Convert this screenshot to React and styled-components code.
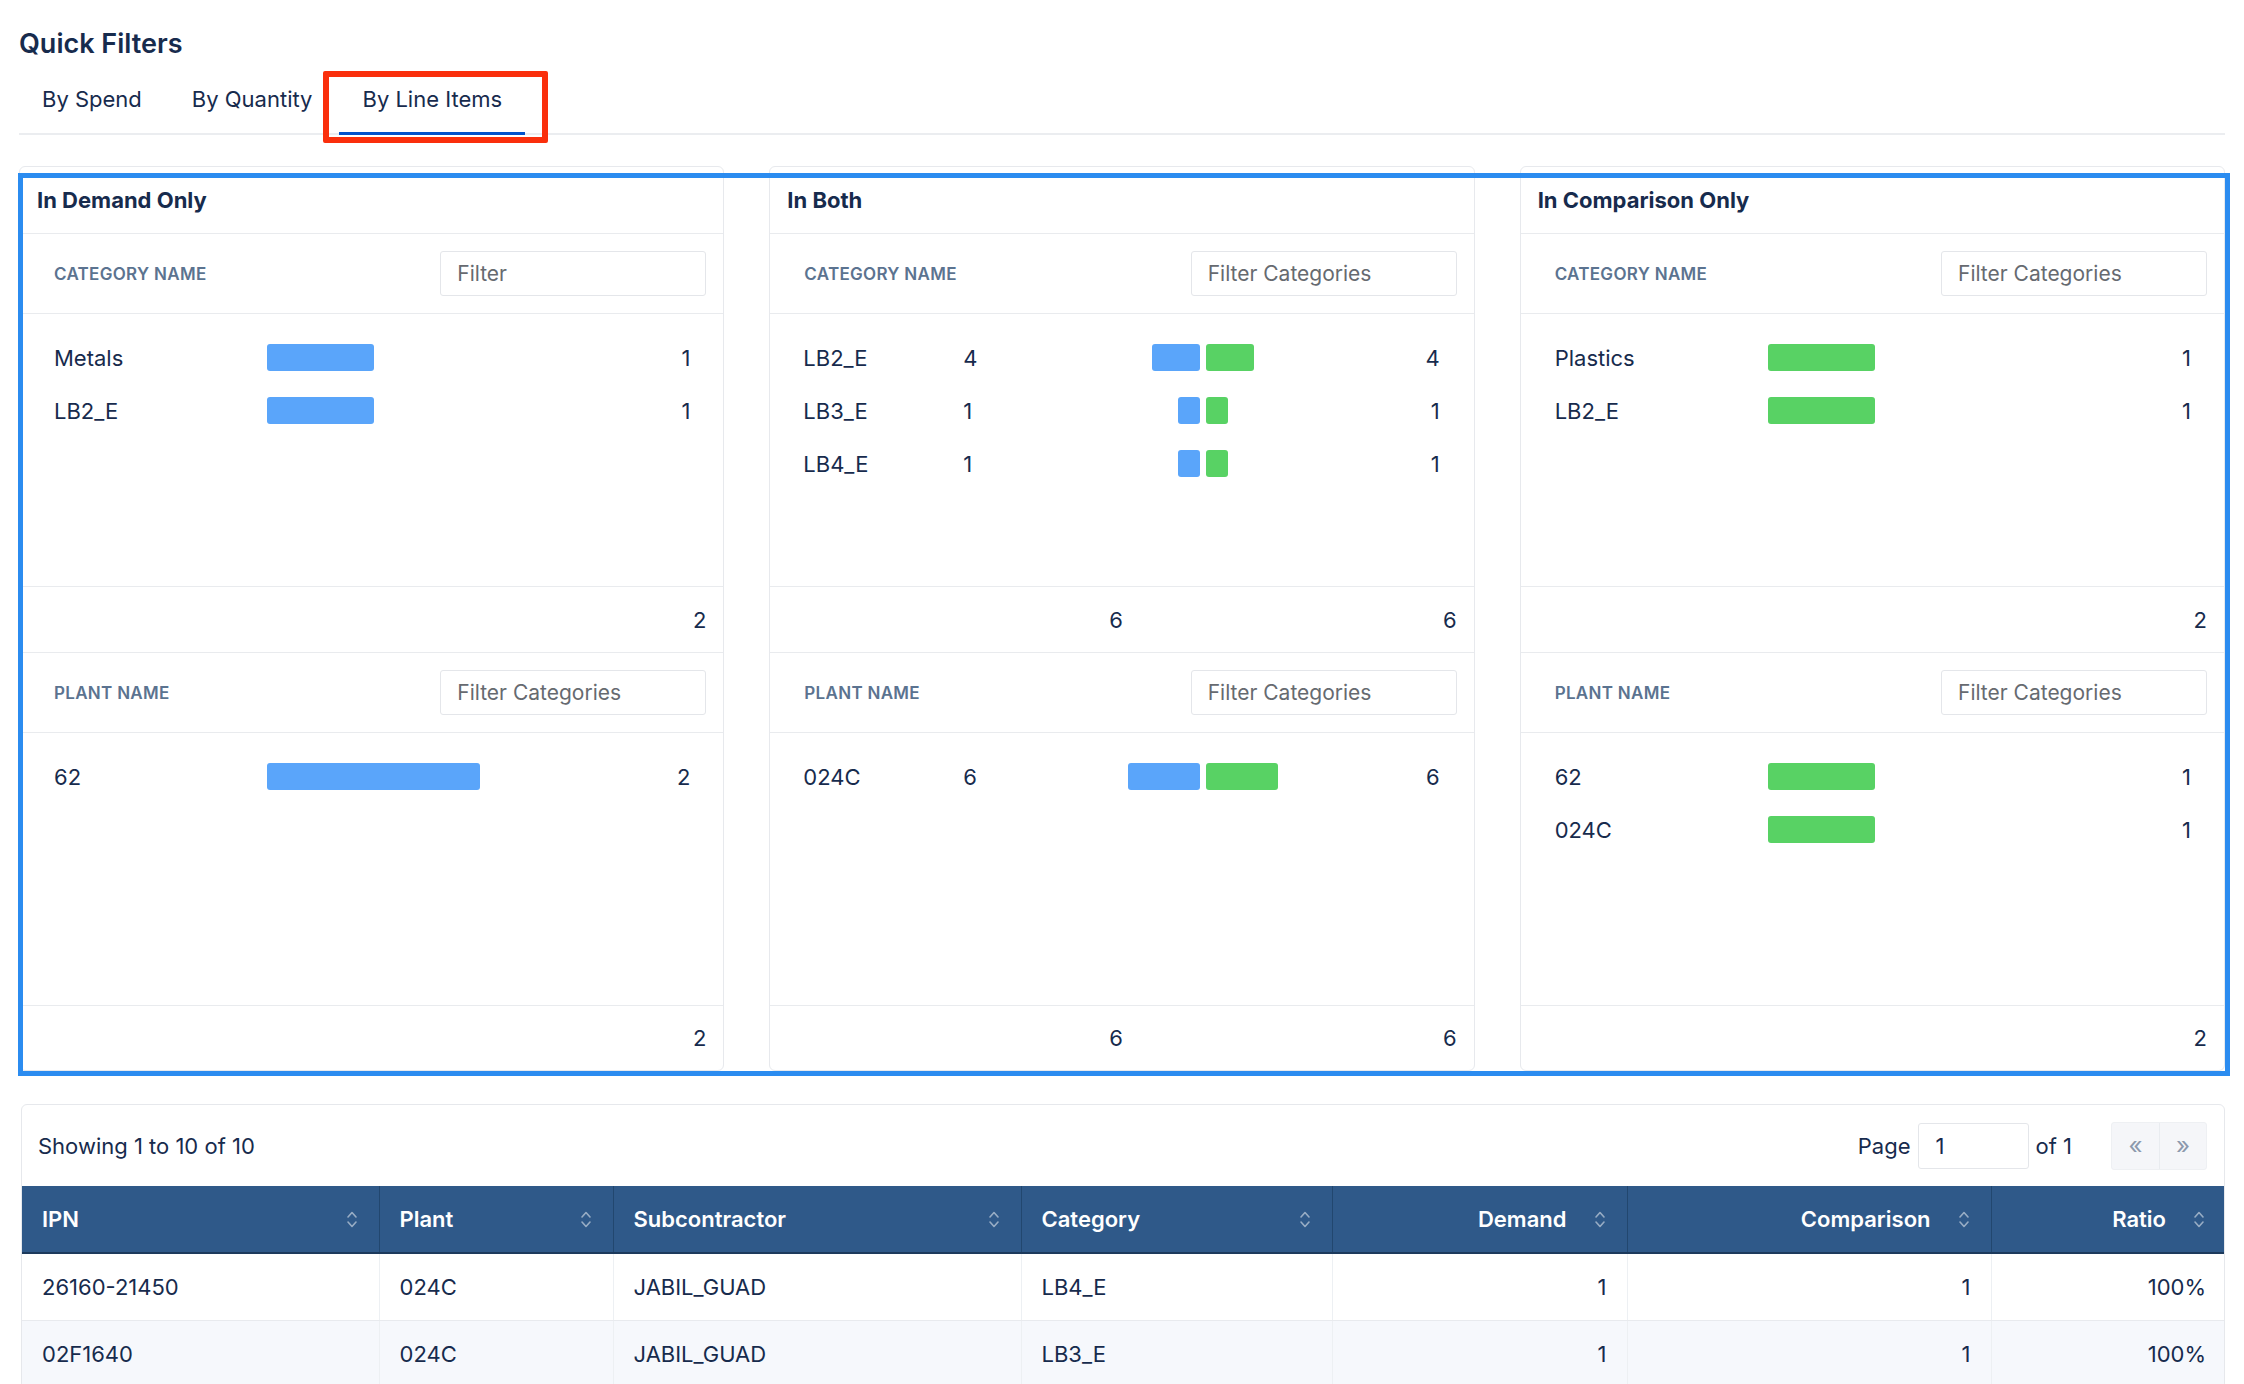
import React from 'react'
import styled, { createGlobalStyle } from 'styled-components'

const GlobalStyle = createGlobalStyle`
  html, body {
    margin: 0;
    padding: 0;
    background: #ffffff;
  }
  body {
    font-family: "Inter", "Liberation Sans", sans-serif;
    color: #172b4d;
    -webkit-font-smoothing: antialiased;
  }
  * { box-sizing: border-box; }
`

const BLUE = '#5aa5fa'
const GREEN = '#58d264'

const Page = styled.div`
  padding: 28px 19px 0 19px;
`

const Title = styled.h1`
  margin: 0;
  font-size: 27px;
  line-height: 32px;
  font-weight: 600;
  color: #172b4d;
`

const TabList = styled.div`
  display: flex;
  gap: 4px;
  margin-top: 6px;
  border-bottom: 2px solid #ebedf0;
`

const Tab = styled.div`
  position: relative;
  height: 69px;
  margin-bottom: -2px;
  padding: 0 23px;
  display: flex;
  align-items: center;
  font-size: 22px;
  color: #172b4d;
  border-bottom: 3px solid ${p => (p.$active ? '#0052cc' : 'transparent')};
`

const RedMark = styled.div`
  position: absolute;
  left: -16px;
  right: -23px;
  top: 5px;
  bottom: -11px;
  border: 6px solid #fa2f0c;
  border-radius: 2px;
  pointer-events: none;
`

const CardGrid = styled.div`
  position: relative;
  margin-top: 31px;
  display: grid;
  grid-template-columns: repeat(3, 1fr);
  gap: 45px;
`

const BlueMark = styled.div`
  position: absolute;
  left: -1px;
  top: 7px;
  right: -5px;
  bottom: -5px;
  border: 5px solid #2b8cf0;
  pointer-events: none;
`

const Card = styled.div`
  border: 1px solid #e7e9ed;
  border-radius: 6px;
  background: #fff;
  display: flex;
  flex-direction: column;
`

const CardHeader = styled.div`
  height: 67px;
  padding: 0 17px;
  display: flex;
  align-items: center;
  border-bottom: 1px solid #e9ebee;
  font-size: 22px;
  font-weight: 700;
  color: #172b4d;
`

const SectionHead = styled.div`
  height: 80px;
  padding: 0 17px 0 34px;
  display: flex;
  align-items: center;
  justify-content: space-between;
  border-bottom: 1px solid #e9ebee;
`

const Label = styled.span`
  font-size: 17px;
  font-weight: 600;
  letter-spacing: 0.3px;
  color: #5b7390;
`

const FilterInput = styled.input`
  width: 266px;
  height: 45px;
  padding: 0 16px;
  border: 1px solid #e4e6ea;
  border-radius: 3px;
  font-family: inherit;
  font-size: 21px;
  color: #172b4d;
  outline: none;
  &::placeholder { color: #666a70; }
`

const Body = styled.div`
  height: 273px;
  padding-top: 17px;
  border-bottom: 1px solid #e9ebee;
`

const SingleRow = styled.div`
  height: 53px;
  padding: 0 33px 0 34px;
  display: grid;
  grid-template-columns: 213px 1fr auto;
  align-items: center;
  font-size: 22px;
`

const BothRow = styled.div`
  height: 53px;
  padding: 0 34px 0 33px;
  display: grid;
  grid-template-columns: 160px 120px 240px 1fr;
  align-items: center;
  font-size: 22px;
`

const Value = styled.span`
  text-align: right;
`

const Pair = styled.div`
  display: grid;
  grid-template-columns: 1fr 1fr;
  gap: 6px;
`

const Bar = styled.div`
  height: 27px;
  width: ${p => p.$w}px;
  border-radius: 3px;
  background: ${p => p.$color};
  justify-self: ${p => p.$align || 'start'};
`

const Footer = styled.div`
  height: ${p => (p.$last ? 64 : 66)}px;
  padding: 0 17px 0 33px;
  display: flex;
  align-items: center;
  justify-content: space-between;
  font-size: 22px;
  border-bottom: ${p => (p.$last ? 'none' : '1px solid #e9ebee')};
`

const FooterLeft = styled.span`
  margin-left: 306px;
`

const TableCard = styled.div`
  margin: 33px 0 0 2px;
  border: 1px solid #e6e8ec;
  border-radius: 6px;
  overflow: hidden;
`

const Toolbar = styled.div`
  height: 81px;
  padding: 0 17px 0 16px;
  display: flex;
  align-items: center;
  justify-content: space-between;
  font-size: 22px;
`

const Pager = styled.div`
  display: flex;
  align-items: center;
  gap: 7px;
`

const PageInput = styled.input`
  width: 111px;
  height: 46px;
  padding: 0 17px;
  border: 1px solid #e4e6ea;
  border-radius: 3px;
  font-family: inherit;
  font-size: 22px;
  color: #172b4d;
  outline: none;
`

const NavGroup = styled.div`
  display: flex;
  margin-left: 32px;
  border: 1px solid #eef0f3;
  border-radius: 3px;
  background: #f5f6f9;
`

const NavButton = styled.button`
  width: 47px;
  height: 46px;
  border: none;
  background: transparent;
  font-family: inherit;
  font-size: 24px;
  color: #8c99ad;
  & + & { border-left: 1px solid #e9ecf0; }
`

const Table = styled.table`
  width: 100%;
  border-collapse: collapse;
  table-layout: fixed;
  font-size: 22px;
`

const Th = styled.th`
  height: 67px;
  padding: 0 21px 0 20px;
  background: #2f5989;
  color: #fff;
  font-weight: 600;
  border-bottom: 2px solid #1d3a5c;
  & + & { border-left: 1px solid #22476f; }
`

const ThInner = styled.div`
  display: flex;
  align-items: center;
  justify-content: ${p => (p.$num ? 'flex-end' : 'space-between')};
  gap: 27px;
`

const Td = styled.td`
  height: 67px;
  padding: 0 20px;
  text-align: ${p => (p.$num ? 'right' : 'left')};
  border-bottom: 1px solid #e8eaee;
  & + & { border-left: 1px solid #edf0f3; }
`

const Tr = styled.tr`
  background: ${p => (p.$alt ? '#f6f8fc' : '#fff')};
`

const SortIcon = () => (
  <svg width="12" height="19" viewBox="0 0 12 19" fill="none" stroke="rgba(255,255,255,0.5)" strokeWidth="1.6" strokeLinecap="round" strokeLinejoin="round">
    <path d="M2 7 L6 2.5 L10 7" />
    <path d="M2 12 L6 16.5 L10 12" />
  </svg>
)

const cards = [
  {
    title: 'In Demand Only',
    mode: 'single',
    color: BLUE,
    sections: [
      { label: 'CATEGORY NAME', placeholder: 'Filter', rows: [{ name: 'Metals', v: 1, w: 107 }, { name: 'LB2_E', v: 1, w: 107 }], total: 2 },
      { label: 'PLANT NAME', placeholder: 'Filter Categories', rows: [{ name: '62', v: 2, w: 213 }], total: 2 },
    ],
  },
  {
    title: 'In Both',
    mode: 'both',
    sections: [
      {
        label: 'CATEGORY NAME',
        placeholder: 'Filter Categories',
        rows: [
          { name: 'LB2_E', d: 4, c: 4, w: 48 },
          { name: 'LB3_E', d: 1, c: 1, w: 22 },
          { name: 'LB4_E', d: 1, c: 1, w: 22 },
        ],
        totals: [6, 6],
      },
      { label: 'PLANT NAME', placeholder: 'Filter Categories', rows: [{ name: '024C', d: 6, c: 6, w: 72 }], totals: [6, 6] },
    ],
  },
  {
    title: 'In Comparison Only',
    mode: 'single',
    color: GREEN,
    sections: [
      { label: 'CATEGORY NAME', placeholder: 'Filter Categories', rows: [{ name: 'Plastics', v: 1, w: 107 }, { name: 'LB2_E', v: 1, w: 107 }], total: 2 },
      { label: 'PLANT NAME', placeholder: 'Filter Categories', rows: [{ name: '62', v: 1, w: 107 }, { name: '024C', v: 1, w: 107 }], total: 2 },
    ],
  },
]

const columns = [
  { key: 'ipn', label: 'IPN', width: 357 },
  { key: 'plant', label: 'Plant', width: 234 },
  { key: 'sub', label: 'Subcontractor', width: 408 },
  { key: 'cat', label: 'Category', width: 311 },
  { key: 'demand', label: 'Demand', width: 295, num: true },
  { key: 'comp', label: 'Comparison', width: 364, num: true },
  { key: 'ratio', label: 'Ratio', width: 235, num: true },
]

const rows = [
  { ipn: '26160-21450', plant: '024C', sub: 'JABIL_GUAD', cat: 'LB4_E', demand: 1, comp: 1, ratio: '100%' },
  { ipn: '02F1640', plant: '024C', sub: 'JABIL_GUAD', cat: 'LB3_E', demand: 1, comp: 1, ratio: '100%' },
]

const Section = ({ card, section, last }) => (
  <>
    <SectionHead>
      <Label>{section.label}</Label>
      <FilterInput placeholder={section.placeholder} />
    </SectionHead>
    <Body>
      {section.rows.map(r =>
        card.mode === 'both' ? (
          <BothRow key={r.name}>
            <span>{r.name}</span>
            <span>{r.d}</span>
            <Pair>
              <Bar $w={r.w} $color={BLUE} $align="end" />
              <Bar $w={r.w} $color={GREEN} />
            </Pair>
            <Value>{r.c}</Value>
          </BothRow>
        ) : (
          <SingleRow key={r.name}>
            <span>{r.name}</span>
            <Bar $w={r.w} $color={card.color} />
            <Value>{r.v}</Value>
          </SingleRow>
        )
      )}
    </Body>
    <Footer $last={last}>
      {card.mode === 'both' ? (
        <>
          <FooterLeft>{section.totals[0]}</FooterLeft>
          <span>{section.totals[1]}</span>
        </>
      ) : (
        <>
          <span />
          <span>{section.total}</span>
        </>
      )}
    </Footer>
  </>
)

export default function App() {
  return (
    <Page>
      <GlobalStyle />
      <Title>Quick Filters</Title>
      <TabList>
        <Tab>By Spend</Tab>
        <Tab>By Quantity</Tab>
        <Tab $active>
          By Line Items
          <RedMark />
        </Tab>
      </TabList>

      <CardGrid>
        {cards.map(card => (
          <Card key={card.title}>
            <CardHeader>{card.title}</CardHeader>
            {card.sections.map((s, i) => (
              <Section key={s.label} card={card} section={s} last={i === card.sections.length - 1} />
            ))}
          </Card>
        ))}
        <BlueMark />
      </CardGrid>

      <TableCard>
        <Toolbar>
          <span>Showing 1 to 10 of 10</span>
          <Pager>
            <span>Page</span>
            <PageInput defaultValue="1" />
            <span>of 1</span>
            <NavGroup>
              <NavButton>«</NavButton>
              <NavButton>»</NavButton>
            </NavGroup>
          </Pager>
        </Toolbar>
        <Table>
          <colgroup>
            {columns.map(c => (
              <col key={c.key} style={{ width: c.width }} />
            ))}
          </colgroup>
          <thead>
            <tr>
              {columns.map(c => (
                <Th key={c.key}>
                  <ThInner $num={c.num}>
                    <span>{c.label}</span>
                    <SortIcon />
                  </ThInner>
                </Th>
              ))}
            </tr>
          </thead>
          <tbody>
            {rows.map((r, i) => (
              <Tr key={r.ipn} $alt={i % 2 === 1}>
                {columns.map(c => (
                  <Td key={c.key} $num={c.num}>
                    {r[c.key]}
                  </Td>
                ))}
              </Tr>
            ))}
          </tbody>
        </Table>
      </TableCard>
    </Page>
  )
}
